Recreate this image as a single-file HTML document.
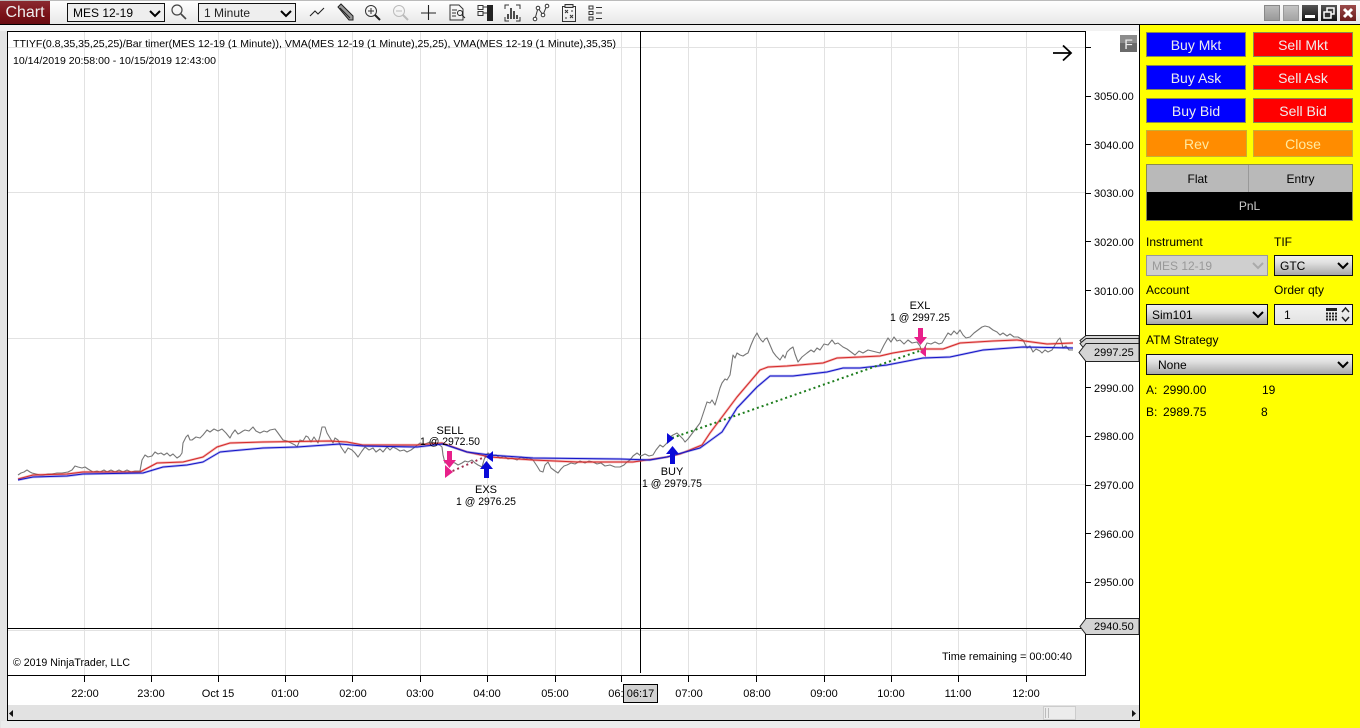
<!DOCTYPE html>
<html><head><meta charset="utf-8"><style>
*{box-sizing:border-box}
html,body{margin:0;padding:0;width:1360px;height:728px;overflow:hidden;background:#e4e4e4;font-family:"Liberation Sans",sans-serif;color:#000}
.a{position:absolute}
.t{position:absolute;white-space:nowrap;line-height:14px}
.btn{position:absolute;width:100px;height:25px;color:#eee;font-size:14px;line-height:25px;text-align:center;border:1px solid #8a8a50}
.sel{position:absolute;height:21px;border:1px solid #111;background:linear-gradient(#f0f0f0,#e0e0e0 35%,#a8a8a8);font-size:12px;line-height:20px;padding-left:5px}
.sel svg{position:absolute;right:3px;top:6px}
.wb{position:absolute;top:5px;width:16px;height:16px}
svg text{font-family:"Liberation Sans",sans-serif;font-size:11px;fill:#000}
</style></head><body>
<div class="a" style="left:0;top:0;width:1360px;height:25px;background:linear-gradient(#fff,#e8e8e8);border-top:1px solid #bbb;border-bottom:1px solid #000"></div>
<div class="a" style="left:0;top:1px;width:50px;height:23px;background:linear-gradient(#8a2a30,#7a1218 60%,#6a0c12);color:#eee;font-size:16px;line-height:23px;text-align:center">Chart</div>
<div class="sel" style="left:67px;top:3px;width:98px;height:19px;line-height:18px;background:#eee;">MES 12-19<svg width="12" height="8"><path d="M1 1l5 5 5-5" fill="none" stroke="#000" stroke-width="2"/></svg></div>
<div class="sel" style="left:198px;top:3px;width:98px;height:19px;line-height:18px;background:#eee;color:#222">1 Minute<svg width="12" height="8"><path d="M1 1l5 5 5-5" fill="none" stroke="#000" stroke-width="2"/></svg></div>

<svg class="a" style="left:165px;top:0" width="445" height="24" viewBox="165 0 445 24" fill="none" stroke="#333">
<circle cx="177" cy="10" r="5" stroke="#444" stroke-width="1.2"/><path d="M181 14l5 5" stroke="#444" stroke-width="1.6"/>
<path d="M310 16l5-5 3 3 6-6" stroke="#222" stroke-width="1.1"/>
<path d="M338 7l3-3 12 12 0 4-4 0z" fill="#999" stroke="#222"/><path d="M340 8l10 10" stroke="#222"/>
<circle cx="371" cy="11" r="5.5" stroke="#333"/><path d="M368 11h6M371 8v6" stroke="#333"/><path d="M375 15l5 5" stroke="#222" stroke-width="2"/>
<circle cx="399" cy="11" r="5.5" stroke="#bbb"/><path d="M396 11h6" stroke="#bbb"/><path d="M403 15l5 5" stroke="#bbb" stroke-width="2"/>
<path d="M421 13h15M428.500 5v15" stroke="#222" stroke-width="1.1"/>
<path d="M450 5h9l4 4v11h-13z" stroke="#333"/><path d="M452 10h5M452 13h4M452 16h4" stroke="#333"/><circle cx="460" cy="13" r="2.500" stroke="#222"/><path d="M462 15l3 3" stroke="#222"/>
<path d="M478 5.500h5v4h-5zM478 11.500h5v4h-5zM483 7h4M483 13h4" stroke="#333"/><rect x="487" y="5" width="6" height="16" fill="#222" stroke="none"/>
<path d="M505 9V5h4M516 5h4v4M505 17v4h4M516 21h4v-4" stroke="#333"/><path d="M509 19v-5M512 19V8M515 19v-8M518 19v-4" stroke="#222" stroke-width="1.6" transform="translate(-1 0)"/>
<path d="M535 19l3-11 5 7 4-10" stroke="#333"/><circle cx="535" cy="19" r="1.800" fill="#fff"/><circle cx="538" cy="8" r="1.800" fill="#fff"/><circle cx="543" cy="15" r="1.800" fill="#fff"/><circle cx="547" cy="6" r="1.800" fill="#fff"/>
<path d="M562.500 6.500h13v15h-13z" stroke="#333"/><path d="M565 4.500h8v3h-8z" fill="#ddd"/><path d="M565 10l3 3M568 10l-3 3M570 15l3 3M573 15l-3 3M565 18h2M571 11h2" stroke="#333"/>
<path d="M589 6h4v3h-4zM589 11.500h4v3h-4zM589 17h4v3h-4zM596 7.500h6M596 13h6M596 18.500h6" stroke="#333"/>
</svg>

<div class="wb" style="left:1264px;background:linear-gradient(#bbb,#999);border:1px solid #888"></div>
<div class="wb" style="left:1283px;background:linear-gradient(#c4c4c4,#a4a4a4);border:1px solid #999"></div>
<div class="wb" style="left:1302px;background:linear-gradient(#555,#111)"><div class="a" style="left:3px;top:10px;width:10px;height:3px;background:#fff"></div></div>
<div class="wb" style="left:1321px;background:linear-gradient(#555,#111)"><svg class="a" style="left:0;top:0" width="16" height="16" fill="none" stroke="#fff" stroke-width="1.500"><rect x="6" y="3" width="7" height="6"/><rect x="3" y="7" width="7" height="6" fill="#333"/></svg></div>
<div class="wb" style="left:1340px;background:linear-gradient(#9a4a4a,#6a1a1a)"><svg class="a" style="left:0;top:0" width="16" height="16"><path d="M4 4l8 8M12 4l-8 8" stroke="#fff" stroke-width="3"/></svg></div>

<!-- chart -->
<div class="a" style="left:0;top:25px;width:1140px;height:6px;background:#f2f2f2"></div>
<div class="a" style="left:7px;top:31px;width:1133px;height:690px;background:#fff;border-left:1px solid #000;border-bottom:1px solid #000"></div>
<div class="a" style="left:1px;top:721px;width:1139px;height:7px;background:#ececec"></div>
<div class="a" style="left:8px;top:705px;width:1131px;height:15px;background:#e2e2e2"></div>

<svg class="a" style="left:0;top:0" width="1140" height="728" viewBox="0 0 1140 728" fill="none">
<g stroke="#e2e2e2" stroke-width="1">
<path d="M84.500 31V675M151.500 31V675M218.500 31V675M285.500 31V675M352.500 31V675M420.500 31V675M487.500 31V675M555.500 31V675M621.500 31V675M688.500 31V675M756.500 31V675M824.500 31V675M891.500 31V675M958.500 31V675M1026.500 31V675"/>
<path d="M8 47.500H1085M8 192.500H1085M8 338.500H1085M8 484.500H1085M8 630.500H1085"/>
</g>
<path d="M7.500 31.500H1085.500V675.500H7.500" stroke="#000"/>
<path d="M8 628.500H1081M640.500 32V673" stroke="#000"/>
<path d="M1139.500 25V721" stroke="#000"/>
<g stroke="#000"><path d="M1086 47.500h5M1086 96.500h5M1086 144.500h5M1086 193.500h5M1086 241.500h5M1086 290.500h5M1086 387.500h5M1086 436.500h5M1086 485.500h5M1086 533.500h5M1086 582.500h5"/>
<path d="M84.500 676v6M151.500 676v6M218.500 676v6M285.500 676v6M352.500 676v6M420.500 676v6M487.500 676v6M555.500 676v6M621.500 676v6M688.500 676v6M756.500 676v6M824.500 676v6M891.500 676v6M958.500 676v6M1026.500 676v6"/></g>

<!-- price -->
<path stroke="#777" stroke-width="1.100" stroke-linejoin="round" d="M18 475L21 473 24 472 27 470 30 472 32 473 36 474 40 475 43 475 48 474 52 474 57 473 62 473 68 472 72 470 75 466 78 467 82 468 85 467 88 469 93 472 97 471 100 472 104 470 107 472 111 470 115 472 119 470 123 472 127 470 131 472 135 471 140 471 142 460 145 455 148 457 152 456 155 452 158 454 161 453 164 455 167 453 170 456 173 454 177 458 180 456 182 453 183 443 186 437 188 435 190 440 192 440 196 437 200 438 203 435 207 430 210 432 214 429 218 431 222 429 226 433 230 438 232 434 235 430 238 434 240 433 243 431 245 430 249 431 253 427 256 431 260 433 264 431 267 432 270 430 275 429 278 433 283 440 287 441 291 443 295 445 297 447 300 440 303 441 306 436 308 437 311 442 314 437 318 443 320 436 322 427 325 427 327 433 330 438 333 443 335 438 338 440 341 447 345 453 348 448 352 450 355 453 358 457 362 451 365 447 369 450 373 448 376 452 380 449 383 452 387 447 390 450 393 447 397 449 400 451 404 450 407 452 411 450 415 447 420 443 425 444 430 442 437 443 442 447 443 455 445 463 448 460 451 462 455 463 458 465 462 463 465 461 468 462 472 460 475 463 478 465 482 467 484 460 486 455 488 453 492 456 496 455 500 458 504 456 508 459 512 458 517 460 521 457 525 459 529 458 533 460 537 466 540 471 543 472 545 465 548 462 551 468 555 471 558 473 561 469 564 466 567 465 571 463 575 464 580 461 585 463 589 461 593 462 597 464 601 463 605 466 610 465 615 467 620 467 624 465 627 462 630 460 633 456 637 453 641 456 645 454 649 456 653 455 656 450 660 445 663 447 667 443 670 437 673 435 677 433 680 436 683 439 685 442 688 439 691 435 694 431 697 427 700 423 702 417 705 408 707 402 710 403 712 400 715 405 718 395 720 388 722 383 725 379 727 380 730 375 732 362 733 355 735 358 737 353 740 355 743 356 746 354 748 353 751 345 754 338 757 333 759 337 761 340 763 342 765 339 767 338 770 345 773 352 776 356 780 360 783 355 785 358 787 352 790 349 793 347 795 354 798 362 802 357 807 353 811 350 814 352 817 348 820 350 824 344 828 345 832 340 835 344 838 343 843 347 847 349 851 352 855 355 859 351 863 353 868 350 872 351 876 352 880 353 884 345 888 338 891 342 894 337 897 341 900 340 904 344 908 340 912 343 917 342 920 346 922 353 925 347 927 343 931 344 935 342 939 344 942 343 945 338 948 333 951 335 954 331 957 334 960 330 963 335 966 338 970 337 974 333 978 330 982 327 985 326 989 327 993 330 997 332 1000 335 1003 333 1007 336 1010 334 1014 337 1018 337 1023 340 1025 344 1027 348 1030 346 1033 352 1036 349 1040 351 1042 353 1045 350 1048 352 1052 350 1055 345 1058 340 1060 338 1062 344 1063 348 1066 346 1069 350 1073 350"/>

<!-- VMA -->
<g stroke-linejoin="round">
<path stroke="#e34848" stroke-opacity=".4" stroke-width="2.400" d="M18 479L33 475 67 474 83 472 140 472 157 463 183 462 203 457 217 447 230 443 263 442 330 441 347 442 363 445 417 445 442 443 467 452 490 457 533 460 577 462 607 462 633 462 667 457 680 454 702 445 710 433 737 397 760 370 768 367 787 366 823 363 837 358 860 357 880 356 893 353 917 349 943 349 960 343 993 341 1017 340 1047 344 1073 343"/>
<path stroke="#d42a2a" stroke-width="1" d="M18 479L33 475 67 474 83 472 140 472 157 463 183 462 203 457 217 447 230 443 263 442 330 441 347 442 363 445 417 445 442 443 467 452 490 457 533 460 577 462 607 462 633 462 667 457 680 454 702 445 710 433 737 397 760 370 768 367 787 366 823 363 837 358 860 357 880 356 893 353 917 349 943 349 960 343 993 341 1017 340 1047 344 1073 343"/>
<path stroke="#4848d8" stroke-opacity=".4" stroke-width="2.400" d="M18 480L33 477 67 476 83 474 143 473 163 467 187 465 203 462 220 452 230 451 263 448 297 447 340 444 363 446 417 447 443 444 467 452 490 455 533 458 620 459 650 460 667 457 700 448 722 432 737 408 757 387 770 376 793 376 827 372 843 368 860 368 887 365 923 358 950 357 983 350 1023 347 1073 348"/>
<path stroke="#1414c8" stroke-width="1" d="M18 480L33 477 67 476 83 474 143 473 163 467 187 465 203 462 220 452 230 451 263 448 297 447 340 444 363 446 417 447 443 444 467 452 490 455 533 458 620 459 650 460 667 457 700 448 722 432 737 408 757 387 770 376 793 376 827 372 843 368 860 368 887 365 923 358 950 357 983 350 1023 347 1073 348"/>
</g>

<!-- trades -->
<path d="M672 438L922 350" stroke="#1d7d1d" stroke-width="2" stroke-dasharray="2 3"/>
<path d="M448 473L487 456" stroke="#a03050" stroke-width="2" stroke-dasharray="2 3"/>
<g fill="#e8208a">
<path d="M447 451h5v9h4l-6.500 8-6.500-8h4z"/>
<path d="M445 465l8 7-8 6z"/>
<path d="M918 328h5v9h4l-6.500 8-6.500-8h4z"/>
<path d="M926 346v11l-6-5z"/>
</g>
<g fill="#0a0ad8">
<path d="M484 478v-9h-4l6.500-8 6.500 8h-4v9z"/>
<path d="M670 464v-10h-4l6.500-8 6.500 8h-4v10z"/>
<path d="M493 451v11l-7-5z"/>
<path d="M667 433l7 5.500-7 5.500z"/>
</g>

<!-- labels -->
<g text-anchor="middle">
<text x="450" y="434">SELL</text><text x="450" y="445" textLength="60" lengthAdjust="spacingAndGlyphs">1 @ 2972.50</text>
<text x="486" y="493">EXS</text><text x="486" y="505" textLength="60" lengthAdjust="spacingAndGlyphs">1 @ 2976.25</text>
<text x="672" y="475">BUY</text><text x="672" y="487" textLength="60" lengthAdjust="spacingAndGlyphs">1 @ 2979.75</text>
<text x="920" y="309">EXL</text><text x="920" y="321" textLength="60" lengthAdjust="spacingAndGlyphs">1 @ 2997.25</text>
<text x="85" y="697">22:00</text><text x="151" y="697">23:00</text><text x="218" y="697">Oct 15</text><text x="285" y="697">01:00</text><text x="353" y="697">02:00</text><text x="420" y="697">03:00</text><text x="487" y="697">04:00</text><text x="555" y="697">05:00</text><text x="622" y="697">06:00</text><text x="689" y="697">07:00</text><text x="757" y="697">08:00</text><text x="824" y="697">09:00</text><text x="891" y="697">10:00</text><text x="958" y="697">11:00</text><text x="1026" y="697">12:00</text>
</g>
<text x="13" y="47" textLength="603" lengthAdjust="spacingAndGlyphs" style="font-size:10.500px">TTIYF(0.8,35,35,25,25)/Bar timer(MES 12-19 (1 Minute)), VMA(MES 12-19 (1 Minute),25,25), VMA(MES 12-19 (1 Minute),35,35)</text>
<text x="13" y="64" textLength="203" lengthAdjust="spacingAndGlyphs" style="font-size:10.500px">10/14/2019 20:58:00 - 10/15/2019 12:43:00</text>
<text x="13" y="666" textLength="117" lengthAdjust="spacingAndGlyphs">© 2019 NinjaTrader, LLC</text>
<text x="942" y="660" textLength="130" lengthAdjust="spacingAndGlyphs">Time remaining = 00:00:40</text>
<g>
<text x="1094" y="100">3050.00</text><text x="1094" y="149">3040.00</text><text x="1094" y="197">3030.00</text><text x="1094" y="246">3020.00</text><text x="1094" y="295">3010.00</text><text x="1094" y="392">2990.00</text><text x="1094" y="440">2980.00</text><text x="1094" y="489">2970.00</text><text x="1094" y="538">2960.00</text><text x="1094" y="586">2950.00</text>
</g>

<!-- crosshair x label -->
<rect x="623.500" y="684.500" width="34" height="18" fill="#d2d2d2" stroke="#000"/>
<text x="640.500" y="697" text-anchor="middle">06:17</text>

<!-- arrow / F -->
<path d="M1053 53h17M1063 45.500l8 7.500-8 7.500" stroke="#000" stroke-width="1.800"/>
<rect x="1120" y="35" width="17" height="17" fill="#6a6a6a"/>
<rect x="1120" y="35" width="17" height="8" fill="#8c8c8c"/>
<text x="1128.500" y="49" text-anchor="middle" style="font-size:14px;fill:#eee">F</text>

<!-- tags -->
<g stroke="#222" fill="#d4d4d4">
<path d="M1139 335.500h-53l-6 5 4 5h55z"/>
<path d="M1139 338.500h-53l-6 5 4 5h55z"/>
<path d="M1139 343.500h-53l-7 9 7 9h53z"/>
<path d="M1139 618.500h-53l-6 8 6 8h53z"/>
</g>
<text x="1094" y="356">2997.25</text>
<text x="1094" y="630">2940.50</text>

<!-- scrollbar -->
<path d="M13 710v7l-4-3.500z" fill="#111"/><path d="M1132 710v7l4-3.500z" fill="#111"/>
<rect x="1043.500" y="706.500" width="32" height="13" fill="#ececec" stroke="#ccc"/>
<path d="M1045.500 708v10M1048.500 708v10" stroke="#bbb"/>
</svg>

<!-- right panel -->
<div class="a" style="left:1140px;top:25px;width:220px;height:703px;background:#ff0"></div>
<div class="btn" style="left:1146px;top:32px;background:#0000ff">Buy Mkt</div>
<div class="btn" style="left:1253px;top:32px;background:#ff0000">Sell Mkt</div>
<div class="btn" style="left:1146px;top:65px;background:#0000ff">Buy Ask</div>
<div class="btn" style="left:1253px;top:65px;background:#ff0000">Sell Ask</div>
<div class="btn" style="left:1146px;top:98px;background:#0000ff">Buy Bid</div>
<div class="btn" style="left:1253px;top:98px;background:#ff0000">Sell Bid</div>
<div class="btn" style="left:1146px;top:130px;width:101px;height:27px;line-height:27px;background:#ff8c00;color:#ffe9a0;border-color:#c8b030">Rev</div>
<div class="btn" style="left:1253px;top:130px;width:100px;height:27px;line-height:27px;background:#ff8c00;color:#ffe9a0;border-color:#c8b030">Close</div>
<div class="a" style="left:1146px;top:164px;width:207px;height:57px;border:1px solid #8a8a50;background:#000">
<div class="t" style="left:0;top:0;width:102px;height:27px;line-height:29px;background:#b9b9b9;text-align:center;font-size:12px;border-right:1px solid #999">Flat</div>
<div class="t" style="left:102px;top:0;width:103px;height:27px;line-height:29px;background:#b9b9b9;text-align:center;font-size:12px">Entry</div>
<div class="t" style="left:0;top:28px;width:205px;height:27px;line-height:27px;color:#ccc;text-align:center;font-size:12px">PnL</div>
</div>
<div class="t" style="left:1146px;top:235px;font-size:12px">Instrument</div>
<div class="t" style="left:1274px;top:235px;font-size:12px">TIF</div>
<div class="sel" style="left:1146px;top:255px;width:122px;background:#cfcfcf;border-color:#999;color:#999">MES 12-19<svg width="12" height="8"><path d="M1 1l5 5 5-5" fill="none" stroke="#aaa" stroke-width="2"/></svg></div>
<div class="sel" style="left:1274px;top:255px;width:79px">GTC<svg width="12" height="8"><path d="M1 1l5 5 5-5" fill="none" stroke="#000" stroke-width="2"/></svg></div>
<div class="t" style="left:1146px;top:283px;font-size:12px">Account</div>
<div class="t" style="left:1274px;top:283px;font-size:12px">Order qty</div>
<div class="sel" style="left:1146px;top:304px;width:122px">Sim101<svg width="12" height="8"><path d="M1 1l5 5 5-5" fill="none" stroke="#000" stroke-width="2"/></svg></div>
<div class="sel" style="left:1274px;top:304px;width:79px;background:linear-gradient(#f2f2f2,#e2e2e2);padding-left:9px">1
<svg style="right:0;top:0" width="30" height="19" fill="#222"><rect x="4" y="3" width="11" height="3"/><path d="M4 7.500h2v2h-2zM7 7.500h2v2h-2zM10 7.500h2v2h-2zM13 7.500h2v2h-2zM4 10.500h2v2h-2zM7 10.500h2v2h-2zM10 10.500h2v2h-2zM13 10.500h2v2h-2zM4 13.500h2v2h-2zM7 13.500h2v2h-2zM10 13.500h2v2h-2zM13 13.500h2v2h-2z"/><path d="M20 7l3.500-4 3.500 4M20 12l3.500 4 3.500-4" fill="none" stroke="#222" stroke-width="1.500"/></svg></div>
<div class="t" style="left:1146px;top:333px;font-size:12px">ATM Strategy</div>
<div class="sel" style="left:1146px;top:354px;width:207px;padding-left:11px">None<svg width="12" height="8"><path d="M1 1l5 5 5-5" fill="none" stroke="#000" stroke-width="2"/></svg></div>
<div class="t" style="left:1146px;top:383px;font-size:12px">A:</div><div class="t" style="left:1163px;top:383px;font-size:12px">2990.00</div><div class="t" style="left:1262px;top:383px;font-size:12px">19</div>
<div class="t" style="left:1146px;top:405px;font-size:12px">B:</div><div class="t" style="left:1163px;top:405px;font-size:12px">2989.75</div><div class="t" style="left:1261px;top:405px;font-size:12px">8</div>
</body></html>
